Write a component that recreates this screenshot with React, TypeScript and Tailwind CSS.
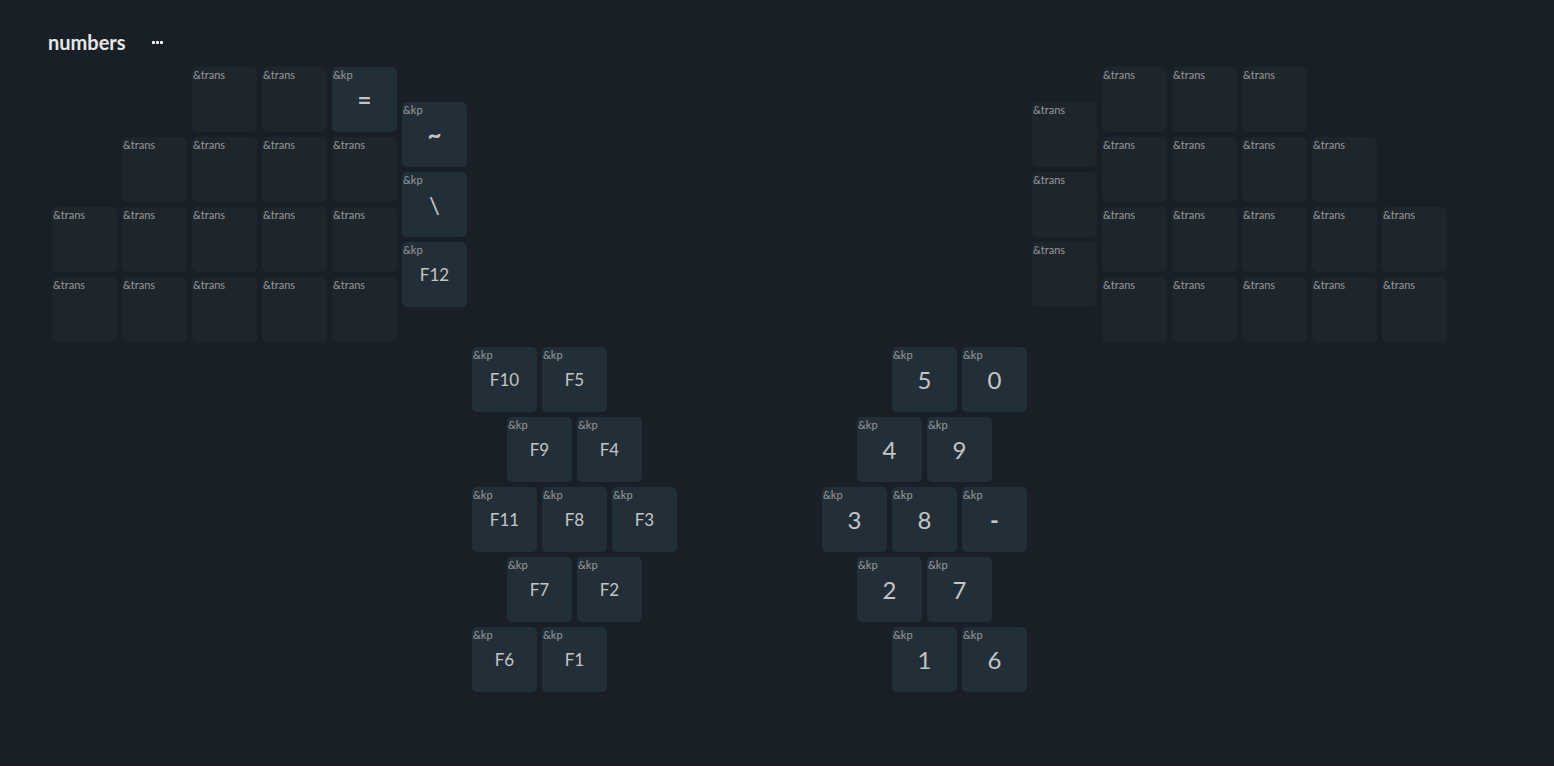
const T = '&trans'
const K = '&kp'

type KeyDef = [x: number, y: number, behavior: string, label?: string]

// Positions are in half-key units.
const keys: KeyDef[] = [
  [4, 0, T], [6, 0, T], [8, 0, K, '='], [30, 0, T], [32, 0, T], [34, 0, T],
  [10, 1, K, '~'], [28, 1, T],
  [2, 2, T], [4, 2, T], [6, 2, T], [8, 2, T], [30, 2, T], [32, 2, T], [34, 2, T], [36, 2, T],
  [10, 3, K, '\\'], [28, 3, T],
  [0, 4, T], [2, 4, T], [4, 4, T], [6, 4, T], [8, 4, T],
  [30, 4, T], [32, 4, T], [34, 4, T], [36, 4, T], [38, 4, T],
  [10, 5, K, 'F12'], [28, 5, T],
  [0, 6, T], [2, 6, T], [4, 6, T], [6, 6, T], [8, 6, T],
  [30, 6, T], [32, 6, T], [34, 6, T], [36, 6, T], [38, 6, T],
  [12, 8, K, 'F10'], [14, 8, K, 'F5'], [24, 8, K, '5'], [26, 8, K, '0'],
  [13, 10, K, 'F9'], [15, 10, K, 'F4'], [23, 10, K, '4'], [25, 10, K, '9'],
  [12, 12, K, 'F11'], [14, 12, K, 'F8'], [16, 12, K, 'F3'],
  [22, 12, K, '3'], [24, 12, K, '8'], [26, 12, K, '-'],
  [13, 14, K, 'F7'], [15, 14, K, 'F2'], [23, 14, K, '2'], [25, 14, K, '7'],
  [12, 16, K, 'F6'], [14, 16, K, 'F1'], [24, 16, K, '1'], [26, 16, K, '6'],
]

function labelStyle(label: string) {
  if (label.length > 1) return 'text-[17px]'
  return /[=~-]/.test(label) ? 'text-2xl font-bold' : 'text-2xl'
}

function Key({ def: [x, y, behavior, label] }: { def: KeyDef }) {
  const tone = label ? 'bg-[#232f38]' : 'bg-[#1e252b]'
  return (
    <button
      type="button"
      className={`grid grid-cols-1 grid-rows-1 rounded-[5px] ${tone}`}
      style={{ gridColumn: `${x + 1} / span 2`, gridRow: `${y + 1} / span 2` }}
    >
      <span className="col-start-1 row-start-1 self-start justify-self-start pl-px text-[11px] leading-4 text-[#97999b]">
        {behavior}
      </span>
      {label && (
        <span className={`col-start-1 row-start-1 place-self-center text-[#c3c4c5] ${labelStyle(label)}`}>{label}</span>
      )}
    </button>
  )
}

export default function App() {
  return (
    <main className="min-h-screen border-b-2 border-[#1b1a21] bg-[#181f26] px-12 pt-7 pb-6 font-['Lato',sans-serif]">
      <header className="flex h-7 items-center gap-6">
        <h1 className="text-xl font-bold text-[#e6e6e6]">numbers</h1>
        <button type="button" aria-label="Layer options" className="flex gap-px p-0.5">
          <span className="size-[3px] rounded-[1px] bg-white" />
          <span className="size-[3px] rounded-[1px] bg-white" />
          <span className="size-[3px] rounded-[1px] bg-white" />
        </button>
      </header>
      <section
        aria-label="Keymap"
        className="mt-[11px] ml-1 grid w-max grid-cols-[repeat(40,30px)] grid-rows-[repeat(18,30px)] gap-[5px]"
      >
        {keys.map((def) => (
          <Key key={`${def[0]}-${def[1]}`} def={def} />
        ))}
      </section>
    </main>
  )
}
